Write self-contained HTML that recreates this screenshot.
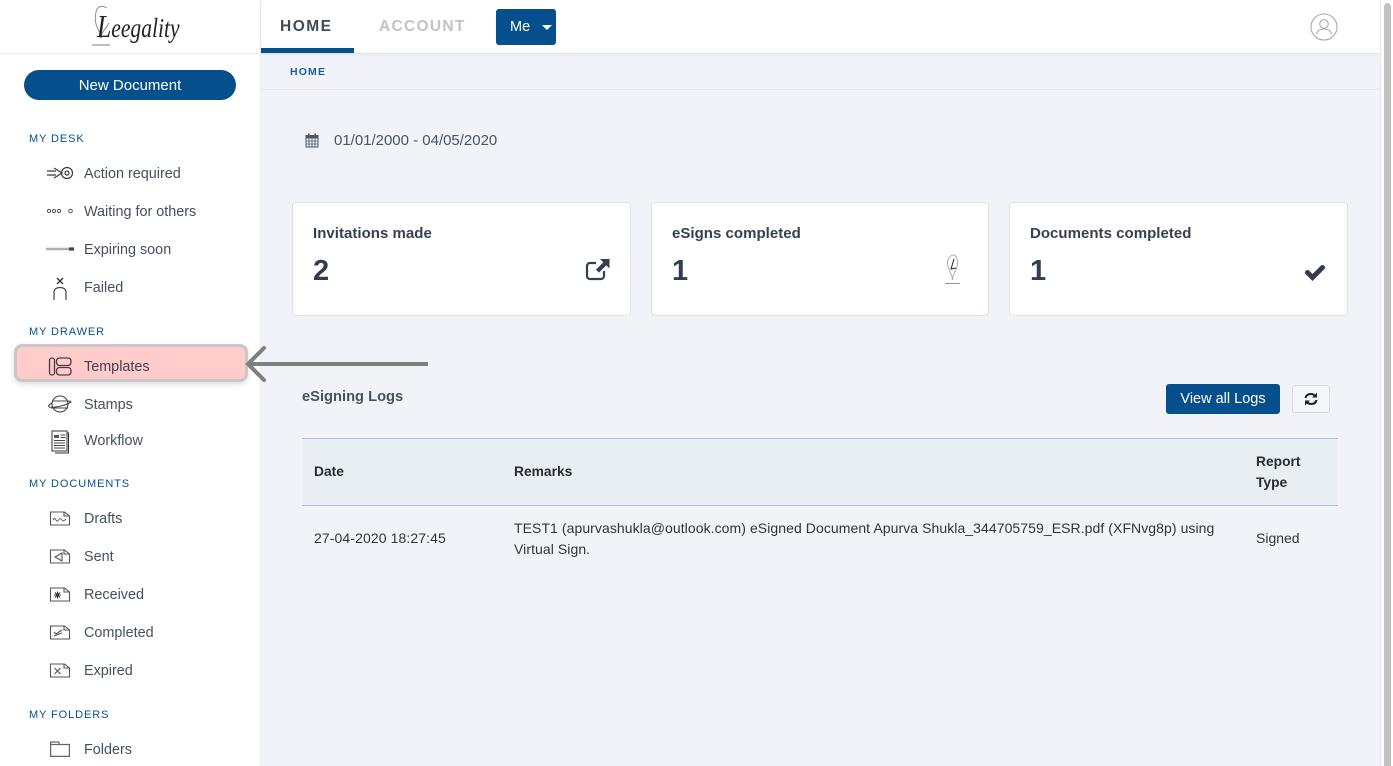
<!DOCTYPE html>
<html lang="en"><head><meta charset="utf-8"><title>Leegality</title>
<style>
*{box-sizing:border-box}
html,body{margin:0;padding:0;width:1393px;height:766px;overflow:hidden;background:#f1f3f8;font-family:"Liberation Sans",sans-serif;color:#3c4858}
.a{position:absolute;white-space:nowrap}
.nav{font-size:14.4px;line-height:20px;color:#45505f;left:84px}
.sec{font-size:11px;line-height:14px;letter-spacing:.9px;color:#05508c;left:29px}
.ic{position:absolute;overflow:visible}
.card{position:absolute;top:202px;height:114px;background:#fff;border:1px solid #dfe1e5;border-radius:4px}
.ct{font-size:15px;font-weight:bold;color:#363f4e;line-height:20px;letter-spacing:.03px}
.cv{font-size:29px;font-weight:bold;color:#323e50;line-height:32px}
.th{font-size:13.8px;font-weight:bold;color:#262d35;line-height:21px}
.td{font-size:14px;color:#2f353d;line-height:21px}
</style></head><body>
<div class="a" style="left:261px;top:54px;width:1119px;height:36px;background:#f1f3f8;border-bottom:1px solid #e5e7ec;border-radius:0 0 4px 4px"></div>

<!-- sidebar -->
<div class="a" style="left:0;top:0;width:261px;height:766px;background:#fff;border-right:1px solid #eceef2"></div>
<div class="a" style="left:0;top:53px;width:261px;height:1px;background:#eeeeee"></div>
<svg class="ic" style="left:90px;top:4px" width="22" height="42" viewBox="0 0 22 42" fill="none"><path d="M17 4C12 1 7 2 6 8c-1 4-1 8 0 12 1 5 4 7 5 12 1-4 6-9 8-13" stroke="#8f8f8f" stroke-width="1"/><circle cx="11" cy="33" r="1.300" fill="#999"/><path d="M2 41h18" stroke="#a8a8a8" stroke-width="1.500"/></svg>
<div class="a" style="left:97px;top:8px;font-family:'Liberation Serif',serif;font-style:italic;font-size:27px;line-height:36px;color:#222;transform:scaleX(.8);transform-origin:left"><span style="font-size:32px">L</span>eegality</div>

<div class="a" style="left:24px;top:70px;width:212px;height:30px;border-radius:15px;background:#05508c;color:#fff;font-size:15px;line-height:31px;text-align:center">New Document</div>

<div class="a sec" style="top:132px">MY DESK</div>
<svg class="ic" style="left:46px;top:165px" width="28" height="16" viewBox="0 0 28 16" fill="none" stroke="#3a3a3a" stroke-width="1.200"><path d="M1 6h9M1 10h9M8 3l8 5-8 5"/><circle cx="21" cy="8" r="5.500"/><circle cx="21" cy="8" r="2"/></svg>
<div class="a nav" style="top:164px">Action required</div>
<svg class="ic" style="left:46px;top:207px" width="28" height="8" viewBox="0 0 28 8" fill="none" stroke="#555" stroke-width="1"><circle cx="3" cy="4" r="1.600"/><circle cx="8" cy="4" r="1.600"/><circle cx="13" cy="4" r="1.600"/><circle cx="24.500" cy="4" r="1.800"/></svg>
<div class="a nav" style="top:202px">Waiting for others</div>
<svg class="ic" style="left:46px;top:245px" width="30" height="8" viewBox="0 0 30 8"><path d="M0 4h24" stroke="#b0b0b0" stroke-width="2.600"/><path d="M23 4h5" stroke="#444" stroke-width="3.200"/></svg>
<div class="a nav" style="top:240px">Expiring soon</div>
<svg class="ic" style="left:52px;top:277px" width="16" height="24" viewBox="0 0 16 24" fill="none"><path d="M5 1l6 6M11 1l-6 6" stroke="#4a2a2a" stroke-width="1.400"/><path d="M2 23v-8c0-6 12-6 12 0v8" stroke="#444" stroke-width="1.200"/></svg>
<div class="a nav" style="top:278px">Failed</div>

<div class="a sec" style="top:325px">MY DRAWER</div>
<div class="a" style="left:14px;top:344px;width:234px;height:38px;background:#ffcbcb;border:3px solid #c8c8c8;border-radius:8px;box-shadow:0 2px 6px rgba(0,0,0,.14)"></div>
<svg class="ic" style="left:48px;top:357px" width="24" height="20" viewBox="0 0 24 20" fill="none" stroke="#4a3c44" stroke-width="1.300"><rect x="1.500" y="1" width="5" height="17" rx="2.400"/><rect x="8.500" y="1" width="14.500" height="7.500" rx="3"/><rect x="8.500" y="10.500" width="14.500" height="7.500" rx="3"/></svg>
<div class="a nav" style="top:357px;color:#44414b">Templates</div>
<div class="a" style="left:250px;top:362px;width:178px;height:4px;background:#7f7f7f"></div>
<svg class="ic" style="left:243px;top:345px" width="24" height="38" viewBox="0 0 24 38" fill="none"><path d="M21 3L5 19l16 16" stroke="#7f7f7f" stroke-width="4" stroke-linecap="round"/></svg>
<svg class="ic" style="left:48px;top:394px" width="24" height="20" viewBox="0 0 24 20" fill="none" stroke="#444" stroke-width="1.100"><circle cx="12" cy="10" r="8"/><path d="M5 7h14M1 13c-1-2 1-3 3-4M1 13c4 1 16-1 22-5 0-1-1-1-3-1M3 14h17"/></svg>
<div class="a nav" style="top:395px">Stamps</div>
<svg class="ic" style="left:50px;top:430px" width="20" height="24" viewBox="0 0 20 24" fill="none" stroke="#333" stroke-width="1"><path d="M17 3h1.500v20H5"/><path d="M2 1h15v20H2z" fill="#fff"/><path d="M4 5h5v3H4z" fill="#555" stroke="none"/><path d="M10.500 5h5M10.500 7.500h5M4 10.500h11M4 13h11M4 15.500h11M4 18h11" stroke="#444" stroke-width=".9"/></svg>
<div class="a nav" style="top:431px">Workflow</div>

<div class="a sec" style="top:477px">MY DOCUMENTS</div>
<svg class="ic" style="left:50px;top:511px" width="20" height="15" viewBox="0 0 20 15" fill="none" stroke="#555" stroke-width="1.100"><path d="M.5 1h14l5 4v9H.5zM14 1v4h5"/><path d="M3 9c1-2 2-2 3 0s2 1 3-.500 2-1 3 .500 2 1 4-1" stroke-width=".9"/></svg>
<div class="a nav" style="top:509px">Drafts</div>
<svg class="ic" style="left:50px;top:549px" width="20" height="15" viewBox="0 0 20 15" fill="none" stroke="#555" stroke-width="1.100"><path d="M.5 1h14l5 4v9H.5zM14 1v4h5"/><path d="M5 8l7-4v8z"/></svg>
<div class="a nav" style="top:547px">Sent</div>
<svg class="ic" style="left:50px;top:587px" width="20" height="15" viewBox="0 0 20 15" fill="none" stroke="#555" stroke-width="1.100"><path d="M.5 1h14l5 4v9H.5zM14 1v4h5"/><path d="M4 8h7M7.500 4.500v7M5 5.500l5 5M10 5.500l-5 5" stroke="#333"/></svg>
<div class="a nav" style="top:585px">Received</div>
<svg class="ic" style="left:50px;top:625px" width="20" height="15" viewBox="0 0 20 15" fill="none" stroke="#555" stroke-width="1.100"><path d="M.5 1h14l5 4v9H.5zM14 1v4h5"/><path d="M4 7l2 2 6-4M4 11l8-3"/></svg>
<div class="a nav" style="top:623px">Completed</div>
<svg class="ic" style="left:50px;top:663px" width="20" height="15" viewBox="0 0 20 15" fill="none" stroke="#555" stroke-width="1.100"><path d="M.5 1h14l5 4v9H.5zM14 1v4h5"/><path d="M4.500 5l6 6M10.500 5l-6 6"/></svg>
<div class="a nav" style="top:661px">Expired</div>

<div class="a sec" style="top:708px">MY FOLDERS</div>
<svg class="ic" style="left:50px;top:741px" width="20" height="16" viewBox="0 0 20 16" fill="none" stroke="#666" stroke-width="1.200"><path d="M.6 15.400V1h8l1 2.500h9.800v11.900z"/><path d="M.6 3.500h9"/></svg>
<div class="a nav" style="top:740px">Folders</div>

<!-- top bar -->
<div class="a" style="left:261px;top:0;width:1119px;height:53px;background:#fff;box-shadow:0 1px 3px rgba(60,70,110,.12)"></div>
<div class="a" style="left:280px;top:17px;font-size:15.5px;font-weight:bold;letter-spacing:1.500px;line-height:20px;color:#3e4a5a">HOME</div>
<div class="a" style="left:261px;top:48px;width:93px;height:5px;background:#05508c"></div>
<div class="a" style="left:379px;top:17px;font-size:15.5px;font-weight:bold;letter-spacing:1.300px;line-height:20px;color:#c3c3c3">ACCOUNT</div>
<div class="a" style="left:496px;top:9px;width:60px;height:36px;background:#05508c;border-radius:3px"></div>
<div class="a" style="left:510px;top:17px;font-size:14.5px;line-height:20px;color:#fff">Me</div>
<div class="a" style="left:542px;top:25px;width:0;height:0;border-left:5px solid transparent;border-right:5px solid transparent;border-top:5px solid #fff"></div>
<svg class="ic" style="left:1310px;top:13px" width="28" height="28" viewBox="0 0 28 28" fill="none" stroke="#a9a9a9" stroke-width="1.100"><circle cx="14" cy="14" r="13"/><circle cx="14" cy="11" r="4.300"/><path d="M6.500 21c1-4 4-5 7.500-5s6.500 1 7.500 5"/></svg>

<!-- scrollbar -->
<div class="a" style="left:1380px;top:0;width:13px;height:766px;background:#fff;border-left:1px solid #e8e8e8"></div>
<div class="a" style="left:1384px;top:3px;width:7px;height:763px;background:#c1c1c1;border-radius:4px 4px 0 0"></div>

<!-- breadcrumb -->
<div class="a" style="left:290px;top:65px;font-size:10.5px;font-weight:bold;letter-spacing:1.150px;line-height:14px;color:#1c5a90">HOME</div>

<!-- date -->
<svg class="ic" style="left:305px;top:133px" width="14" height="14" viewBox="0 0 14 14"><path d="M1 2.500h12V14H1z" fill="none" stroke="#4c5665" stroke-width="1"/><path d="M1 2.500h12V5.500H1z" fill="#4c5665"/><path d="M3 .5h1.600v3.500H3zM9.400.5H11v3.500H9.400z" fill="#4c5665"/><path d="M1 8h12M1 11h12M4 5.500V14M7 5.500V14M10 5.500V14" stroke="#4c5665" stroke-width=".8"/></svg>
<div class="a" style="left:334px;top:131px;font-size:15px;line-height:20px;letter-spacing:-.01px;color:#4c5460">01/01/2000 - 04/05/2020</div>

<!-- cards -->
<div class="card" style="left:292px;width:339px"></div>
<div class="card" style="left:651px;width:338px"></div>
<div class="card" style="left:1009px;width:339px"></div>
<div class="a ct" style="left:313px;top:224px">Invitations made</div>
<div class="a cv" style="left:313px;top:255px">2</div>
<svg class="ic" style="left:585px;top:258px" width="26" height="24" viewBox="0 0 26 24" fill="none"><path d="M11 5H5a3 3 0 0 0-3 3v10a3 3 0 0 0 3 3h11a3 3 0 0 0 3-3v-5" stroke="#323e50" stroke-width="2.200"/><path d="M15 1h9.500v9.500l-3.200-3.200-7.300 7.300-3-3 7.300-7.300z" fill="#323e50"/></svg>
<div class="a ct" style="left:672px;top:224px">eSigns completed</div>
<div class="a cv" style="left:672px;top:255px">1</div>
<svg class="ic" style="left:944px;top:254px" width="17" height="31" viewBox="0 0 17 31" fill="none"><path d="M10 1C6 1 3 5 3.500 10c.5 4 3 8 5 14 1.500-5 4.500-9 5-14 .3-4-1-8-3.500-9z" stroke="#999" stroke-width=".8"/><path d="M10 5L7 15l5-1" stroke="#222" stroke-width="1"/><circle cx="8.500" cy="25" r="1" fill="#aaa"/><path d="M1 29.500h15" stroke="#888" stroke-width=".9"/></svg>
<div class="a ct" style="left:1030px;top:224px">Documents completed</div>
<div class="a cv" style="left:1030px;top:255px">1</div>
<svg class="ic" style="left:1304px;top:263px" width="22" height="18" viewBox="0 0 22 18"><path d="M3.500 9.500L8.500 14.500 18.500 4.500" fill="none" stroke="#323e50" stroke-width="5" stroke-linejoin="miter" stroke-linecap="round"/></svg>

<!-- logs -->
<div class="a" style="left:302px;top:387px;font-size:14.7px;font-weight:bold;line-height:20px;color:#48525f">eSigning Logs</div>
<div class="a" style="left:1166px;top:384px;width:114px;height:30px;background:#05508c;border-radius:3px;color:#fff;font-size:14.5px;line-height:31px;text-align:center">View all Logs</div>
<div class="a" style="left:1292px;top:385px;width:38px;height:28px;background:#f5f6fa;border:1px solid #d8dadf;border-radius:3px"></div>
<svg class="ic" style="left:1304px;top:392px" width="14" height="14" viewBox="0 0 14 14" fill="none" stroke="#222" stroke-width="2.100"><path d="M1.500 6C2 3.500 4 2 7 2c2 0 3.500 1 4.500 2.500"/><path d="M12.500 8C12 10.500 10 12 7 12c-2 0-3.500-1-4.500-2.500"/><path d="M13 .5v5H8z" fill="#222" stroke="none"/><path d="M1 13.500v-5h5z" fill="#222" stroke="none"/></svg>

<div class="a" style="left:302px;top:438px;width:1036px;height:68px;background:#e9eef2;border-top:1px solid #b6c0d8;border-bottom:1px solid #b6c0d8"></div>
<div class="a th" style="left:314px;top:461px">Date</div>
<div class="a th" style="left:514px;top:461px">Remarks</div>
<div class="a th" style="left:1256px;top:451px">Report<br>Type</div>
<div class="a td" style="left:314px;top:528px;letter-spacing:.1px">27-04-2020 18:27:45</div>
<div class="a td" style="left:514px;top:518px;letter-spacing:.07px">TEST1 (apurvashukla@outlook.com) eSigned Document Apurva Shukla_344705759_ESR.pdf (XFNvg8p) using<br>Virtual Sign.</div>
<div class="a td" style="left:1256px;top:528px">Signed</div>
</body></html>
